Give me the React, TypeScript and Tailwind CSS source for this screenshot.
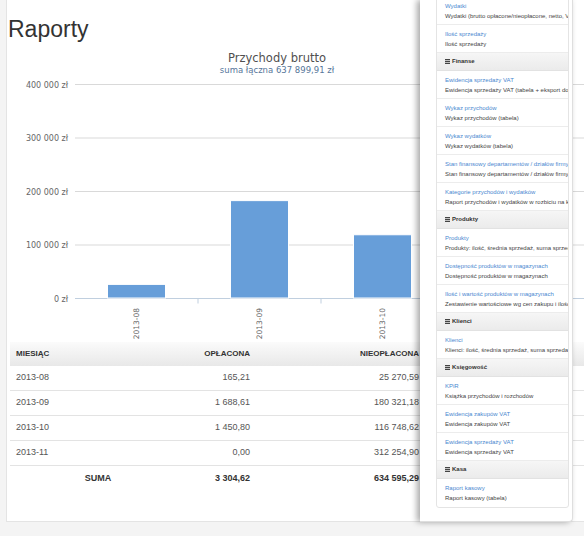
import React from "react";

type Item = { kind: "item"; link: string; desc: string } | { kind: "header"; title: string };

const items: Item[] = [
  { kind: "item", link: "Wydatki", desc: "Wydatki (brutto opłacone/nieopłacone, netto, VAT)" },
  { kind: "item", link: "Ilość sprzedaży", desc: "Ilość sprzedaży" },
  { kind: "header", title: "Finanse" },
  { kind: "item", link: "Ewidencja sprzedaży VAT", desc: "Ewidencja sprzedaży VAT (tabela + eksport do pliku)" },
  { kind: "item", link: "Wykaz przychodów", desc: "Wykaz przychodów (tabela)" },
  { kind: "item", link: "Wykaz wydatków", desc: "Wykaz wydatków (tabela)" },
  { kind: "item", link: "Stan finansowy departamentów / działów firmy", desc: "Stan finansowy departamentów / działów firmy" },
  { kind: "item", link: "Kategorie przychodów i wydatków", desc: "Raport przychodów i wydatków w rozbiciu na kategorie" },
  { kind: "header", title: "Produkty" },
  { kind: "item", link: "Produkty", desc: "Produkty: ilość, średnia sprzedaż, suma sprzedaży" },
  { kind: "item", link: "Dostępność produktów w magazynach", desc: "Dostępność produktów w magazynach" },
  { kind: "item", link: "Ilość i wartość produktów w magazynach", desc: "Zestawienie wartościowe wg cen zakupu i ilości" },
  { kind: "header", title: "Klienci" },
  { kind: "item", link: "Klienci", desc: "Klienci: ilość, średnia sprzedaż, suma sprzedaży" },
  { kind: "header", title: "Księgowość" },
  { kind: "item", link: "KPiR", desc: "Książka przychodów i rozchodów" },
  { kind: "item", link: "Ewidencja zakupów VAT", desc: "Ewidencja zakupów VAT" },
  { kind: "item", link: "Ewidencja sprzedaży VAT", desc: "Ewidencja sprzedaży VAT" },
  { kind: "header", title: "Kasa" },
  { kind: "item", link: "Raport kasowy", desc: "Raport kasowy (tabela)" },
];

const rows = [
  ["2013-08", "165,21", "25 270,59"],
  ["2013-09", "1 688,61", "180 321,18"],
  ["2013-10", "1 450,80", "116 748,62"],
  ["2013-11", "0,00", "312 254,90"],
];

const bars = [
  { label: "2013-08", value: 25435.8 },
  { label: "2013-09", value: 182009.79 },
  { label: "2013-10", value: 118199.42 },
  { label: "2013-11", value: 312254.9 },
];

const gridYs = [41.5, 95, 148.5, 202, 255.5];
const gridLabels = ["400 000 zł", "300 000 zł", "200 000 zł", "100 000 zł", "0 zł"];

function ListIcon() {
  return (
    <svg width="5" height="5" viewBox="0 0 5 5" className="shrink-0">
      <rect x="0" y="0" width="5" height="1.2" fill="#444" />
      <rect x="0" y="1.9" width="5" height="1.2" fill="#444" />
      <rect x="0" y="3.8" width="5" height="1.2" fill="#444" />
    </svg>
  );
}

function Chart() {
  const base = 255.5;
  const scale = 53.5 / 100000;
  return (
    <svg width="600" height="299" className="block" style={{ fontFamily: '"DejaVu Sans", sans-serif' }}>
      <text x="270" y="18.5" textAnchor="middle" fontSize="11.5" fill="#505050">
        Przychody brutto
      </text>
      <text x="270" y="30" textAnchor="middle" fontSize="8.5" fill="#56769a">
        suma łączna 637 899,91 zł
      </text>
      {gridYs.map((y, i) => (
        <g key={i}>
          <line x1="68" x2="600" y1={y} y2={y} stroke={i === 4 ? "#c0cfdf" : "#d9d9d9"} strokeWidth="1" />
          <text x="61" y={y + 3} textAnchor="end" fontSize="8" fill="#666">
            {gridLabels[i]}
          </text>
        </g>
      ))}
      {[1, 2, 3].map((i) => (
        <line key={i} x1={68 + i * 123} x2={68 + i * 123} y1={base} y2={base + 5} stroke="#c0cfdf" strokeWidth="1" />
      ))}
      {bars.map((b, i) => {
        const h = b.value * scale;
        const x = 68 + i * 123 + 32.5;
        const cx = 68 + i * 123 + 61.5;
        return (
          <g key={b.label}>
            <rect x={x} y={base - 0.5 - h} width="58" height={h} fill="#679ed9" stroke="#ffffff" strokeWidth="1" />
            <text
              x={cx + 2.7}
              y="265"
              fontSize="7.5"
              fill="#666"
              textAnchor="end"
              transform={`rotate(-90 ${cx + 2.7} 265)`}
            >
              {b.label}
            </text>
          </g>
        );
      })}
    </svg>
  );
}

export default function App() {
  return (
    <div className="relative w-[584px] h-[536px] overflow-hidden bg-[#f4f4f4]" style={{ fontFamily: '"Liberation Sans", Arial, sans-serif' }}>
      {/* main card */}
      <div className="ml-[6px] w-[620px] h-[522px] bg-white border-l border-b border-[#e4e4e4]">
        <h1 className="pl-[1px] pt-[15px] text-[23px] leading-[28px] font-normal text-[#333]">Raporty</h1>
        <Chart />
        <div className="ml-[3px] w-[600px]">
          <div className="flex h-[24px] items-center bg-gradient-to-b from-[#fbfbfb] to-[#e8e8e8] text-[8px] font-bold uppercase text-[#333]">
            <div className="w-[176px] pl-[6px]">Miesiąc</div>
            <div className="w-[72px] pr-[8px] text-right">Opłacona</div>
            <div className="w-[169px] pr-[8px] text-right">Nieopłacona</div>
          </div>
          {rows.map((r) => (
            <div key={r[0]} className="flex h-[25px] items-center border-b border-[#e3e3e3] text-[9px] text-[#555]">
              <div className="w-[176px] pl-[6px]">{r[0]}</div>
              <div className="w-[72px] pr-[8px] text-right">{r[1]}</div>
              <div className="w-[169px] pr-[8px] text-right">{r[2]}</div>
            </div>
          ))}
          <div className="flex h-[25px] items-center text-[9px] font-bold text-[#333]">
            <div className="w-[176px] text-center">SUMA</div>
            <div className="w-[72px] pr-[8px] text-right">3 304,62</div>
            <div className="w-[169px] pr-[8px] text-right">634 595,29</div>
          </div>
        </div>
      </div>

      {/* overlay drawer */}
      <div className="absolute left-[420px] top-0 w-[153px] h-[522px] bg-white border-r border-b border-[#dedede] rounded-br-[4px] shadow-[-3px_0_6px_rgba(0,0,0,0.35)] overflow-hidden">
        <div className="ml-[16px] mt-[-4px] w-[133px] border border-[#e4e4e4] rounded-[3px] overflow-hidden">
          {items.map((it, i) =>
            it.kind === "item" ? (
              <div key={i} className="h-[28px] pl-[8px] pt-[4px] border-b border-[#ececec] last:border-b-0 whitespace-nowrap overflow-hidden text-[6px]">
                <div className="leading-[10px] text-[#4a88d0]">{it.link}</div>
                <div className="leading-[10px] text-[#444]">{it.desc}</div>
              </div>
            ) : (
              <div key={i} className="h-[18px] flex items-center gap-[2px] pl-[8px] border-b border-[#e2e2e2] bg-gradient-to-b from-[#f6f6f6] to-[#ebebeb] text-[6px] font-bold text-[#333]">
                <ListIcon />
                <span>{it.title}</span>
              </div>
            )
          )}
        </div>
      </div>
    </div>
  );
}
